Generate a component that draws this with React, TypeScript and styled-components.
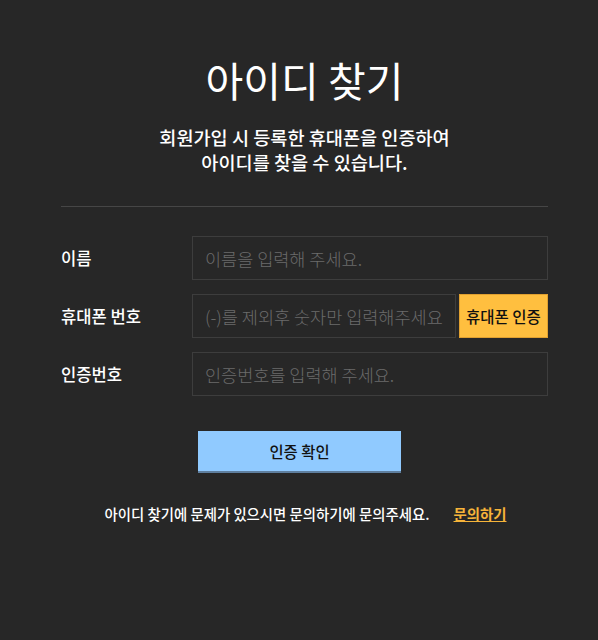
import React from 'react';
import styled, { createGlobalStyle } from 'styled-components';

const colors = {
  bg: '#272727',
  white: '#ffffff',
  line: '#464646',
  border: '#3d3d3d',
  placeholder: '#6b6b6b',
  yellow: '#ffbf3f',
  blue: '#90caff',
  link: '#f6b43a',
};

const GlobalStyle = createGlobalStyle`
  html, body {
    margin: 0;
    padding: 0;
    background: ${colors.bg};
  }
  body {
    font-family: "Noto Sans CJK KR", "Noto Sans", sans-serif;
    color: ${colors.white};
  }
  * { box-sizing: border-box; }
`;

const Page = styled.div`
  width: 598px;
  min-height: 640px;
  background: ${colors.bg};
  padding: 51px 50px 0 61px;
`;

const Heading = styled.h1`
  margin: 0;
  text-align: center;
  font-size: 41px;
  font-weight: 400;
  line-height: 56px;
`;

const SubText = styled.p`
  margin: 17px 0 0;
  text-align: center;
  font-size: 18.6px;
  font-weight: 500;
  line-height: 25px;
`;

const Divider = styled.hr`
  margin: 32px 0 0;
  border: 0;
  border-top: 1px solid ${colors.line};
`;

const Form = styled.div`
  margin-top: 29px;
  display: flex;
  flex-direction: column;
  gap: 14px;
`;

const Row = styled.div`
  display: grid;
  grid-template-columns: 131px 1fr;
  align-items: center;
`;

const Label = styled.label`
  font-size: 16.6px;
  font-weight: 500;
`;

const Field = styled.div`
  display: flex;
  gap: 3px;
`;

const Input = styled.input`
  flex: 1;
  min-width: 0;
  height: 44px;
  padding: 0 12px;
  border: 1px solid ${colors.border};
  background: transparent;
  color: ${colors.white};
  font-family: inherit;
  font-size: 17.5px;
  font-weight: 300;
  outline: none;
  &::placeholder {
    color: ${colors.placeholder};
  }
`;

const SideButton = styled.button`
  width: 89px;
  height: 44px;
  padding: 0;
  border: 1px solid #e0a030;
  background: ${colors.yellow};
  color: #111;
  font-family: inherit;
  font-size: 15.5px;
  font-weight: 500;
`;

const SubmitButton = styled.button`
  display: block;
  width: 203px;
  height: 42px;
  margin: 35px auto 0 137px;
  padding: 0;
  border: 0;
  border-bottom: 2px solid #5f7f9f;
  background: ${colors.blue};
  color: #111;
  font-family: inherit;
  font-size: 15.4px;
  font-weight: 500;
`;

const Footer = styled.div`
  margin-top: 30px;
  display: flex;
  justify-content: center;
  align-items: center;
  gap: 24px;
  padding-left: 2px;
  font-size: 14.4px;
  font-weight: 500;
`;

const HelpLink = styled.a`
  color: ${colors.link};
  font-weight: 700;
  font-size: 14.4px;
  text-decoration: underline;
`;

const App = () => {
  return (
    <Page>
      <GlobalStyle />
      <Heading>아이디 찾기</Heading>
      <SubText>
        회원가입 시 등록한 휴대폰을 인증하여
        <br />
        아이디를 찾을 수 있습니다.
      </SubText>
      <Divider />

      <Form>
        <Row>
          <Label>이름</Label>
          <Field>
            <Input placeholder="이름을 입력해 주세요." />
          </Field>
        </Row>
        <Row>
          <Label>휴대폰 번호</Label>
          <Field>
            <Input placeholder="(-)를 제외후 숫자만 입력해주세요" />
            <SideButton>휴대폰 인증</SideButton>
          </Field>
        </Row>
        <Row>
          <Label>인증번호</Label>
          <Field>
            <Input placeholder="인증번호를 입력해 주세요." />
          </Field>
        </Row>
      </Form>

      <SubmitButton>인증 확인</SubmitButton>

      <Footer>
        <span>아이디 찾기에 문제가 있으시면 문의하기에 문의주세요.</span>
        <HelpLink>문의하기</HelpLink>
      </Footer>
    </Page>
  );
};

export default App;
